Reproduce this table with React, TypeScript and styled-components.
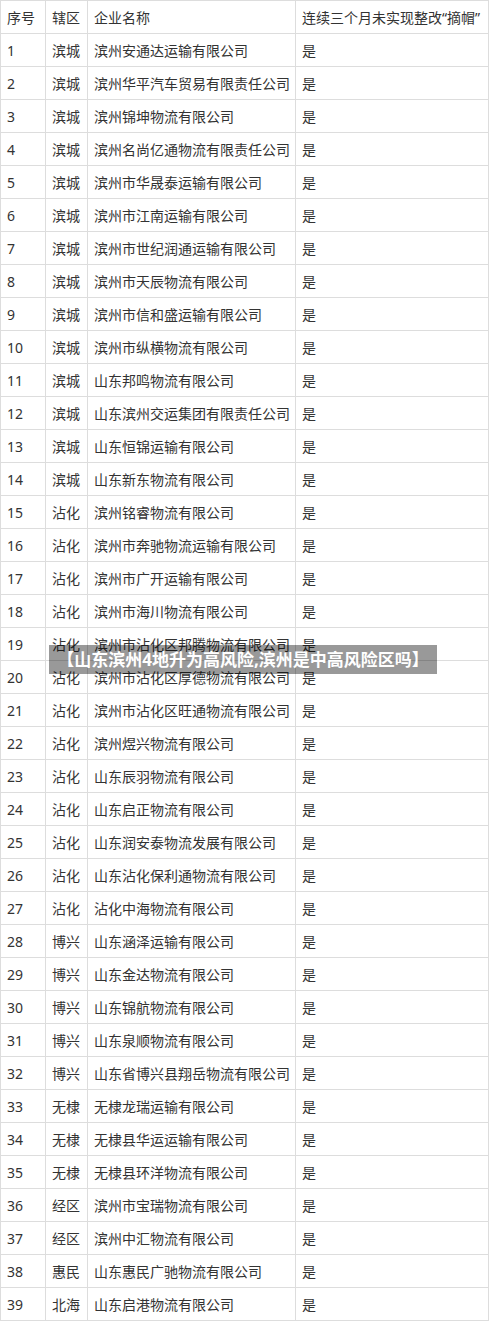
import React from 'react';
import styled, { createGlobalStyle } from 'styled-components';

const GlobalStyle = createGlobalStyle`
  html, body {
    margin: 0;
    padding: 0;
    background: #ffffff;
  }
  body {
    font-family: "Noto Sans", "Noto Sans CJK SC", sans-serif;
    color: #333333;
  }
`;

const Page = styled.div`
  position: relative;
  width: 489px;
`;

const Table = styled.table`
  width: 489px;
  border-collapse: collapse;
  table-layout: fixed;
  font-size: 14px;
`;

const Row = styled.tr`
  height: 33px;
`;

const Cell = styled.td`
  border: 1px solid #dddddd;
  padding: 2px 0 0 6px;
  white-space: nowrap;
  overflow: hidden;
  font-weight: 400;
  text-align: left;
  line-height: 20px;
  color: #333333;
`;

// overlay caption lying over the table, as in the screenshot
const Banner = styled.div`
  position: absolute;
  left: 49px;
  top: 645px;
  width: 388px;
  height: 29px;
  background: rgba(0, 0, 0, 0.4);
  color: #ffffff;
  font-size: 17px;
  font-weight: 700;
  line-height: 29px;
  text-align: center;
  white-space: nowrap;
`;

const rows: [string, string][] = [
  ['滨城', '滨州安通达运输有限公司'],
  ['滨城', '滨州华平汽车贸易有限责任公司'],
  ['滨城', '滨州锦坤物流有限公司'],
  ['滨城', '滨州名尚亿通物流有限责任公司'],
  ['滨城', '滨州市华晟泰运输有限公司'],
  ['滨城', '滨州市江南运输有限公司'],
  ['滨城', '滨州市世纪润通运输有限公司'],
  ['滨城', '滨州市天辰物流有限公司'],
  ['滨城', '滨州市信和盛运输有限公司'],
  ['滨城', '滨州市纵横物流有限公司'],
  ['滨城', '山东邦鸣物流有限公司'],
  ['滨城', '山东滨州交运集团有限责任公司'],
  ['滨城', '山东恒锦运输有限公司'],
  ['滨城', '山东新东物流有限公司'],
  ['沾化', '滨州铭睿物流有限公司'],
  ['沾化', '滨州市奔驰物流运输有限公司'],
  ['沾化', '滨州市广开运输有限公司'],
  ['沾化', '滨州市海川物流有限公司'],
  ['沾化', '滨州市沾化区邦腾物流有限公司'],
  ['沾化', '滨州市沾化区厚德物流有限公司'],
  ['沾化', '滨州市沾化区旺通物流有限公司'],
  ['沾化', '滨州煜兴物流有限公司'],
  ['沾化', '山东辰羽物流有限公司'],
  ['沾化', '山东启正物流有限公司'],
  ['沾化', '山东润安泰物流发展有限公司'],
  ['沾化', '山东沾化保利通物流有限公司'],
  ['沾化', '沾化中海物流有限公司'],
  ['博兴', '山东涵泽运输有限公司'],
  ['博兴', '山东金达物流有限公司'],
  ['博兴', '山东锦航物流有限公司'],
  ['博兴', '山东泉顺物流有限公司'],
  ['博兴', '山东省博兴县翔岳物流有限公司'],
  ['无棣', '无棣龙瑞运输有限公司'],
  ['无棣', '无棣县华运运输有限公司'],
  ['无棣', '无棣县环洋物流有限公司'],
  ['经区', '滨州市宝瑞物流有限公司'],
  ['经区', '滨州中汇物流有限公司'],
  ['惠民', '山东惠民广驰物流有限公司'],
  ['北海', '山东启港物流有限公司'],
];

const App: React.FC = () => {
  return (
    <Page>
      <GlobalStyle />
      <Table>
        <colgroup>
          <col style={{ width: 45 }} />
          <col style={{ width: 42 }} />
          <col style={{ width: 208 }} />
          <col />
        </colgroup>
        <tbody>
          <Row>
            <Cell>序号</Cell>
            <Cell>辖区</Cell>
            <Cell>企业名称</Cell>
            <Cell>连续三个月未实现整改“摘帽”</Cell>
          </Row>
          {rows.map(([area, name], i) => (
            <Row key={i}>
              <Cell>{i + 1}</Cell>
              <Cell>{area}</Cell>
              <Cell>{name}</Cell>
              <Cell>是</Cell>
            </Row>
          ))}
        </tbody>
      </Table>
      <Banner>【山东滨州4地升为高风险,滨州是中高风险区吗】</Banner>
    </Page>
  );
};

export default App;
